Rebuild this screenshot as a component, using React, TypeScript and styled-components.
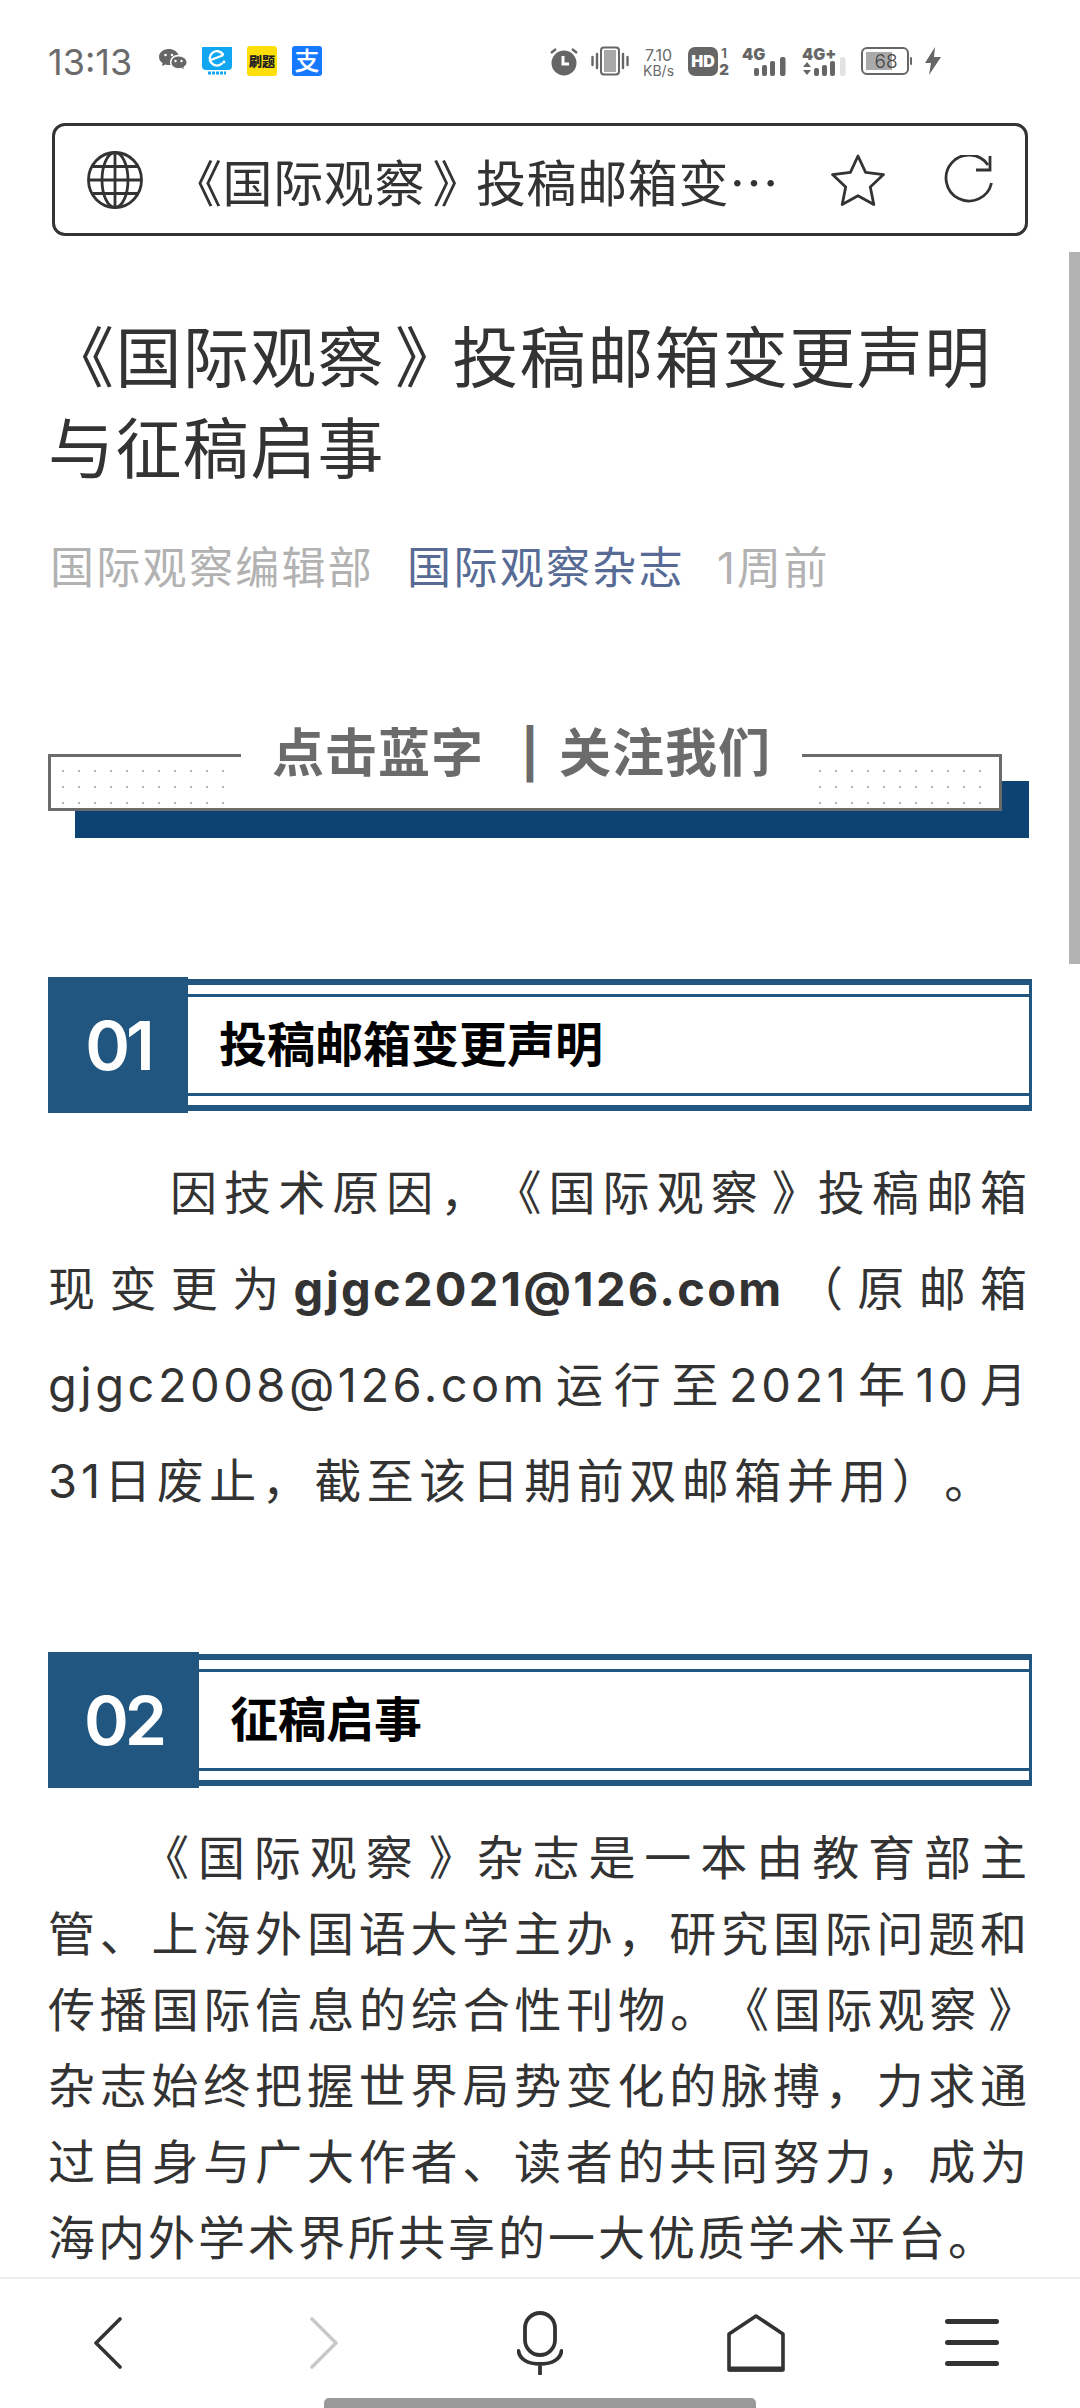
import React from "react";
import styled, { createGlobalStyle } from "styled-components";

const Global = createGlobalStyle`
  html, body { margin: 0; padding: 0; background: #fff; }
  * { box-sizing: border-box; }
`;
const FONT = `Inter, "Noto Sans CJK SC", sans-serif`;

const Page = styled.div`
  position: relative; width: 1080px; height: 2408px; overflow: hidden; background: #fff;
  display: flex; flex-direction: column; font-family: ${FONT}; text-spacing-trim: space-all; text-autospace: no-autospace;
`;
const StatusBar = styled.div`
  height: 123px; flex: none; display: flex; align-items: flex-start; padding: 45px 139px 0 48px; color: #666;
`;
const Time = styled.span`font-size: 36px; line-height: 34px; width: 111px; flex: none; color: #6a6a6a;`;
const LeftIcons = styled.div`display: flex; align-items: center; height: 32px; gap: 15px;`;
const RightIcons = styled.div`margin-left: auto; display: flex; align-items: center; height: 32px; gap: 11.7px;`;
const AppTile = styled.div<{ $bg: string }>`
  width: 30px; height: 30px; border-radius: 3px; background: ${p => p.$bg}; color: #fff;
  display: flex; align-items: center; justify-content: center; overflow: hidden; flex: none;
`;
const AliGlyph = styled.span`font-size: 25px; line-height: 30px; font-weight: 500;`;
const YellowGlyph = styled.span`font-size: 13px; line-height: 30px; color: #222; font-weight: 900; white-space: nowrap;`;
const Speed = styled.div`
  display: flex; flex-direction: column; font-size: 14px; line-height: 15px; color: #6a6a6a; width: 36px; align-items: center; margin-top: 2px; flex:none;
`;
const SpeedValue = styled.span`font-size: 16px; line-height: 16px;`;

const UrlBar = styled.div`
  flex: none; margin: 0 52px; height: 113px; border: 3px solid #333; border-radius: 13px;
  display: flex; align-items: center; padding: 0 31px 0 32px;
`;
const UrlText = styled.span`
  margin-left: 29px; font-size: 50px; line-height: 60px; color: #333; width: 606px; flex: none; white-space: nowrap; letter-spacing: 0.6px;
  font-family: "Noto Sans CJK SC", sans-serif;
`;
const Open = styled.span`font-family: "Noto Sans CJK KR", "Noto Sans CJK SC", sans-serif; line-height: 0;`;
const Close = styled(Open)`margin-left: 0.15em; letter-spacing: -0.13em;`;
const StarWrap = styled.div`margin-left: 52px; display: flex;`;
const ReloadWrap = styled.div`margin-left: auto; display: flex;`;

const Article = styled.div`flex: 1; min-height: 0; overflow: hidden; padding: 77px 51px 0 48px;`;
const Title = styled.h1`
  margin: 0; font-size: 66px; line-height: 91px; font-weight: 400; color: #333; letter-spacing: 1.4px;
`;
const Meta = styled.div`
  margin-top: 43px; padding-left: 2px; display: flex; font-size: 44px; line-height: 60px; color: #b2b2b2; letter-spacing: 2.3px;
`;
const MetaLink = styled.span`margin-left: 33px; color: #576b95;`;
const MetaTime = styled.span`margin-left: 32px;`;

const Banner = styled.div`position: relative; margin-top: 130px; width: 981px; height: 110px;`;
const BannerBack = styled.div`position: absolute; left: 27px; right: 0; top: 53px; bottom: 0; background: #0c4373;`;
const BannerBox = styled.div`
  position: absolute; left: 0; top: 26px; width: 954px; height: 57px; background: #fff; border: 3px solid #6b6b6b;
`;
const Dots = styled.div<{ $side: "left" | "right"; $inset: number }>`
  position: absolute; top: 7px; ${p => p.$side}: ${p => p.$inset}px; width: 178px; height: 40px;
  background-image: radial-gradient(circle, #999 0.6px, transparent 1px);
  background-size: 16px 16px; background-position: 0 -1px;
`;
const BannerTitle = styled.div`
  position: absolute; left: 190px; top: -33px; width: 561px; height: 60px; background: #fff;
  display: flex; justify-content: center;
  font-size: 52px; line-height: 60px; font-weight: 700; color: #6b6b6b; letter-spacing: 1px; white-space: nowrap;
`;
const BannerBar = styled.span`
  display: inline-block; width: 75px; padding-left: 37px; font-family: Inter, sans-serif; font-weight: 700; font-size: 48px;
`;
const Section = styled.div<{ $top: number }>`
  margin-top: ${p => p.$top}px; height: 136px; width: 984px; display: flex; align-items: center;
`;
const SectionNum = styled.div<{ $w: number }>`
  width: ${p => p.$w}px; height: 136px; background: #20567f; color: #fff; flex: none;
  display: flex; align-items: center; justify-content: center; font-size: 68px; font-weight: 600; line-height: 1; letter-spacing: -4px;
`;
const SectionFrame = styled.div`
  flex: 1; height: 132px; border: solid #20567f; border-width: 6px 3px 6px 0; padding: 9px 0;
  display: flex;
`;
const SectionInner = styled.div`
  flex: 1; border: solid #20567f; border-width: 3px 0; display: flex; align-items: center; padding-left: 31px;
  font-size: 48px; font-weight: 700; color: #000; line-height: 60px;
`;
const Body = styled.div<{ $lh: number; $top: number }>`
  margin-top: ${p => p.$top}px; width: 981px; font-size: 47px; line-height: ${p => p.$lh}px; color: #333; letter-spacing: 2px;
`;
const Line = styled.div<{ $last?: boolean; $indent?: number; $ls?: number }>`
  white-space: nowrap; text-align: ${p => (p.$last ? "left" : "justify")}; text-align-last: ${p => (p.$last ? "left" : "justify")};
  padding-left: ${p => p.$indent ?? 0}px;
  ${p => (p.$ls ? `letter-spacing: ${p.$ls}px;` : "")}
`;
const Strong = styled.strong`font-weight: 700; letter-spacing: 2.3px;`;
const Latin = styled.span<{ $ls: number }>`letter-spacing: ${p => p.$ls}px;`;

const ScrollThumb = styled.div`
  position: absolute; right: 0; top: 252px; width: 11px; height: 712px; background: #b3b3b3;
`;
const Nav = styled.div`
  flex: none; height: 131px; border-top: 2px solid #eee; background: #fff; display: grid; grid-template-columns: repeat(5, 216px);
  align-items: start; padding-top: 29px; position: relative;
`;
const NavSlot = styled.div`display: flex; justify-content: center; height: 70px; align-items: center;`;
const HomeIndicator = styled.div`
  position: absolute; left: 324px; bottom: 0; width: 432px; height: 10px; background: #999; border-radius: 5px 5px 0 0;
`;

const Wechat = () => (
  <svg width="28" height="24" viewBox="0 0 28 24" fill="#666" style={{ flex: "none" }}>
    <path d="M10 0C4.500 0 0 3.500 0 8c0 2.500 1.400 4.600 3.500 6L3 17l3.400-1.600c1.200.4 2.400.6 3.600.6.500 0 1 0 1.500-.1-.3-.8-.5-1.700-.5-2.600C11 9 14.600 5.800 19.400 5.700 18 2.400 14.300 0 10 0z" />
    <path d="M19.500 7C15 7 12 10 12 13.300s3 6.300 7.500 6.300c1 0 1.900-.1 2.800-.4L25.500 21l-.7-2.900c2-1.200 3.200-3 3.200-4.800C28 10 24 7 19.500 7z" stroke="#fff" strokeWidth="1" />
    <circle cx="16.500" cy="12" r="1.200" fill="#fff" /><circle cx="22.500" cy="12" r="1.200" fill="#fff" />
    <circle cx="6.500" cy="6" r="1.300" fill="#fff" /><circle cx="13" cy="6" r="1.300" fill="#fff" />
  </svg>
);
const Eleme = () => (
  <svg width="30" height="29" viewBox="0 0 30 29" style={{ flex: "none" }}>
    <path d="M0 0h30v19q0 4-4 4H4q-4 0-4-4z" fill="#10a6f2" />
    <path d="M21 7.500A7.200 7.200 0 1 0 20 16.500M10 12.500l10.500-4" fill="none" stroke="#fff" strokeWidth="2.400" strokeLinecap="round" />
    <circle cx="22" cy="15" r="1.400" fill="#fff" />
    <path d="M6 26h18" stroke="#10a6f2" strokeWidth="3" strokeDasharray="3 1" />
  </svg>
);
const Alarm = () => (
  <svg width="30" height="30" viewBox="0 0 30 30" style={{ flex: "none" }}>
    <circle cx="15" cy="17" r="12.500" fill="#666" />
    <path d="M14 10v8h6" fill="none" stroke="#fff" strokeWidth="3" />
    <path d="M2 7l5-4M28 7l-5-4" stroke="#666" strokeWidth="2.400" />
  </svg>
);
const Vibrate = () => (
  <svg width="38" height="30" viewBox="0 0 38 30" style={{ flex: "none" }}>
    <rect x="10" y="1.500" width="18" height="27" rx="3" fill="#fff" stroke="#666" strokeWidth="2" />
    <rect x="13" y="4" width="12" height="22" fill="#a8a8a8" />
    <path d="M1.500 11v8M6 8v14M32 8v14M36.500 11v8" stroke="#666" strokeWidth="2.400" strokeLinecap="round" />
  </svg>
);
const HD = () => (
  <svg width="42" height="30" viewBox="0 0 42 30" overflow="visible" style={{ flex: "none" }}>
    <rect x="0" y="1" width="30" height="29" rx="7" fill="#666" />
    <text x="15" y="21" textAnchor="middle" fontSize="16" fontWeight="900" fill="#fff" fontFamily="Inter">HD</text>
    <text x="36" y="12" textAnchor="middle" fontSize="13" fontWeight="700" fill="#666" fontFamily="Inter">1</text>
    <text x="36" y="29" textAnchor="middle" fontSize="15" fontWeight="900" fill="#666" fontFamily="Inter">2</text>
  </svg>
);
const Signal = ({ plus }: { plus?: boolean }) => (
  <svg width="48" height="30" viewBox="0 0 48 30" overflow="visible" style={{ flex: "none" }}>
    <text x="0" y="14" fontSize="16" fontWeight="900" fill="#666" fontFamily="Inter">{plus ? "4G+" : "4G"}</text>
    {plus && <path d="M1 21l4-5 4 5zM1 24l4 5 4-5z" fill="#666" />}
    {[[12, 22], [20, 19], [28, 15]].map(([x, y]) => (
      <rect key={x} x={x} y={y} width="5" height={30 - y} rx="2" fill="#666" />
    ))}
    <rect x="38" y="11" width="5.500" height="19" rx="2" fill={plus ? "#e2e2e2" : "#666"} />
  </svg>
);
const Battery = () => (
  <svg width="52" height="28" viewBox="0 0 52 28" overflow="visible" style={{ flex: "none" }}>
    <rect x="1" y="1" width="46" height="26" rx="5" fill="#fff" stroke="#666" strokeWidth="2" />
    <rect x="5" y="5" width="26" height="18" fill="#aaa" />
    <text x="25" y="21" textAnchor="middle" fontSize="19" fontWeight="300" fill="#444" fontFamily="Inter">68</text>
    <rect x="49" y="10" width="2" height="8" rx="1" fill="#666" />
  </svg>
);
const Bolt = () => (
  <svg width="16" height="28" viewBox="0 0 16 28" style={{ flex: "none" }}>
    <path d="M10 0L0 16h6l-2 12 12-18H9z" fill="#666" />
  </svg>
);
const Globe = () => (
  <svg width="56" height="58" viewBox="0 0 56 58" fill="none" stroke="#333" strokeWidth="2.800">
    <ellipse cx="28" cy="29" rx="26.500" ry="27.500" />
    <ellipse cx="28" cy="29" rx="13" ry="27.500" />
    <path d="M28 1.500v55M5 15.500h46M5 42.500h46M1.500 29h53" />
  </svg>
);
const Star = () => (
  <svg width="56" height="52" viewBox="0 0 56 52" fill="none" stroke="#333" strokeWidth="2.800" strokeLinejoin="round">
    <path d="M28 2l7.600 16.300 17.900 2.300-13.200 12.300 3.500 17.600L28 41.700l-15.800 8.800 3.500-17.600L2.500 20.600l17.900-2.300z" />
  </svg>
);
const Reload = () => (
  <svg width="50" height="50" viewBox="0 0 50 50" fill="none" stroke="#333" strokeWidth="2.800">
    <path d="M44 10A23 23 0 1 0 47.500 28" />
    <path d="M46 1v14H32" />
  </svg>
);
const Back = () => (
  <svg width="28" height="52" viewBox="0 0 28 52" fill="none" stroke="#333" strokeWidth="3.600" strokeLinecap="round" strokeLinejoin="round"><path d="M26 2L2 26l24 24" /></svg>
);
const Forward = () => (
  <svg width="28" height="52" viewBox="0 0 28 52" fill="none" stroke="#c9c9c9" strokeWidth="3.600" strokeLinecap="round" strokeLinejoin="round"><path d="M2 2l24 24L2 50" /></svg>
);
const Mic = () => (
  <svg width="46" height="64" viewBox="0 0 46 64" fill="none" stroke="#333" strokeWidth="3.800" strokeLinecap="round">
    <rect x="8" y="2" width="30" height="42" rx="15" />
    <path d="M1.500 40c1 8 9 13 21.500 13s20.500-5 21.500-13M23 53v10" />
  </svg>
);
const Home = () => (
  <svg width="58" height="58" viewBox="0 0 58 58" fill="none" stroke="#333" strokeWidth="3.600" strokeLinejoin="round">
    <path d="M2 20L29 2l27 18v36H2z" />
    <path d="M2 55h54" strokeWidth="5" />
  </svg>
);
const Menu = () => (
  <svg width="54" height="48" viewBox="0 0 54 48" fill="#333">
    <rect y="0" width="54" height="5" rx="2.500" /><rect y="21" width="54" height="5" rx="2.500" /><rect y="42" width="54" height="5" rx="2.500" />
  </svg>
);

export default function App() {
  return (
    <Page>
      <Global />
      <StatusBar>
        <Time>13:13</Time>
        <LeftIcons>
          <Wechat />
          <Eleme />
          <AppTile $bg="#ffdf0a"><YellowGlyph>刷题</YellowGlyph></AppTile>
          <AppTile $bg="#1677ff"><AliGlyph>支</AliGlyph></AppTile>
        </LeftIcons>
        <RightIcons>
          <Alarm />
          <Vibrate />
          <Speed><SpeedValue>7.10</SpeedValue><span>KB/s</span></Speed>
          <HD />
          <Signal />
          <Signal plus />
          <Battery />
          <Bolt />
        </RightIcons>
      </StatusBar>
      <UrlBar>
        <Globe />
        <UrlText><Open>《</Open>国际观察<Close>》</Close>投稿邮箱变…</UrlText>
        <StarWrap><Star /></StarWrap>
        <ReloadWrap><Reload /></ReloadWrap>
      </UrlBar>
      <Article>
        <Title><Open>《</Open>国际观察<Close>》</Close>投稿邮箱变更声明<br />与征稿启事</Title>
        <Meta>
          <span>国际观察编辑部</span>
          <MetaLink>国际观察杂志</MetaLink>
          <MetaTime>1周前</MetaTime>
        </Meta>
        <Banner>
          <BannerBack />
          <BannerBox>
            <Dots $side="left" $inset={4} />
            <Dots $side="right" $inset={9} />
            <BannerTitle>点击蓝字<BannerBar>|</BannerBar>关注我们</BannerTitle>
          </BannerBox>
        </Banner>
        <Section $top={139}>
          <SectionNum $w={140}>01</SectionNum>
          <SectionFrame><SectionInner>投稿邮箱变更声明</SectionInner></SectionFrame>
        </Section>
        <Body $lh={96} $top={32}>
          <Line $indent={122}>因技术原因，<Open>《</Open>国际观察<Close>》</Close>投稿邮箱</Line>
          <Line>现变更为<Strong>gjgc2021@126.com</Strong>（原邮箱</Line>
          <Line><Latin $ls={3.5}>gjgc2008@126.com</Latin>运行至<Latin $ls={3.5}>2021</Latin>年<Latin $ls={3.5}>10</Latin>月</Line>
          <Line $last $ls={5.500}><Latin $ls={4}>31</Latin>日废止，截至该日期前双邮箱并用）。</Line>
        </Body>
        <Section $top={123}>
          <SectionNum $w={151}>02</SectionNum>
          <SectionFrame><SectionInner>征稿启事</SectionInner></SectionFrame>
        </Section>
        <Body $lh={76} $top={32}>
          <Line $indent={94}><Open>《</Open>国际观察<Close>》</Close>杂志是一本由教育部主</Line>
          <Line>管、上海外国语大学主办，研究国际问题和</Line>
          <Line>传播国际信息的综合性刊物。<Open>《</Open>国际观察<Close>》</Close></Line>
          <Line>杂志始终把握世界局势变化的脉搏，力求通</Line>
          <Line>过自身与广大作者、读者的共同努力，成为</Line>
          <Line $last $ls={3}>海内外学术界所共享的一大优质学术平台。</Line>
        </Body>
      </Article>
      <ScrollThumb />
      <Nav>
        <NavSlot><Back /></NavSlot>
        <NavSlot><Forward /></NavSlot>
        <NavSlot><Mic /></NavSlot>
        <NavSlot><Home /></NavSlot>
        <NavSlot><Menu /></NavSlot>
        <HomeIndicator />
      </Nav>
    </Page>
  );
}
